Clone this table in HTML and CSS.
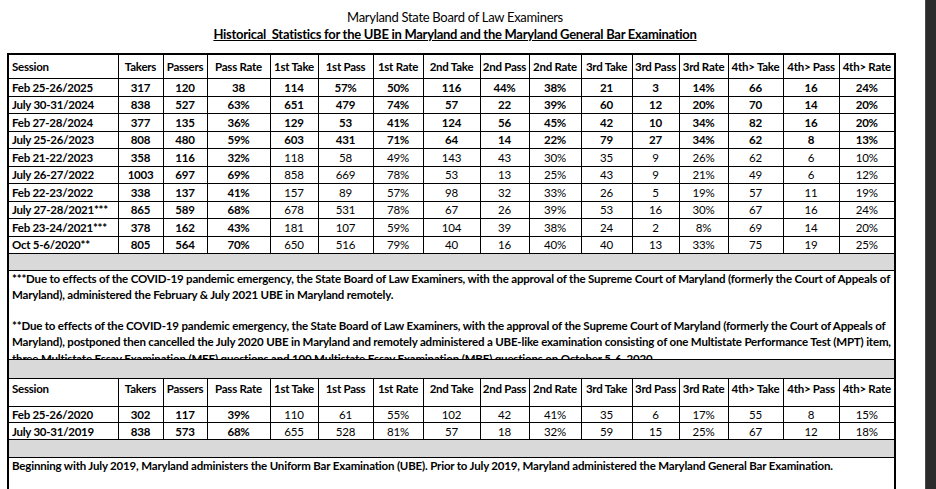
FILE: index.html
```html
<!DOCTYPE html>
<html>
<head>
<meta charset="utf-8">
<link rel="stylesheet" href="styles.css">
</head>
<body>
<div class="page">
  <div class="titles">
    <div class="t1">Maryland State Board of Law Examiners</div>
    <div class="t2">Historical&nbsp; Statistics for the UBE in Maryland and the Maryland General Bar Examination</div>
  </div>
  <table class="stats">
    <colgroup>
      <col style="width:110px"><col style="width:45px"><col style="width:44px"><col style="width:63px">
      <col style="width:48px"><col style="width:55px"><col style="width:50px"><col style="width:57px">
      <col style="width:49px"><col style="width:52px"><col style="width:51px"><col style="width:47px">
      <col style="width:49px"><col style="width:55px"><col style="width:56px"><col style="width:56px">
    </colgroup>
    <tr class="head">
      <th class="ses">Session</th><th>Takers</th><th>Passers</th><th>Pass Rate</th><th>1st Take</th><th>1st Pass</th><th>1st Rate</th><th>2nd Take</th><th>2nd Pass</th><th>2nd Rate</th><th>3rd Take</th><th>3rd Pass</th><th>3rd Rate</th><th>4th&gt; Take</th><th>4th&gt; Pass</th><th>4th&gt; Rate</th>
    </tr>
    <tr class="row all-bold"><td class="ses">Feb 25-26/2025</td><td>317</td><td>120</td><td>38</td><td>114</td><td>57%</td><td>50%</td><td>116</td><td>44%</td><td>38%</td><td>21</td><td>3</td><td>14%</td><td>66</td><td>16</td><td>24%</td></tr>
    <tr class="row all-bold"><td class="ses">July 30-31/2024</td><td>838</td><td>527</td><td>63%</td><td>651</td><td>479</td><td>74%</td><td>57</td><td>22</td><td>39%</td><td>60</td><td>12</td><td>20%</td><td>70</td><td>14</td><td>20%</td></tr>
    <tr class="row all-bold"><td class="ses">Feb 27-28/2024</td><td>377</td><td>135</td><td>36%</td><td>129</td><td>53</td><td>41%</td><td>124</td><td>56</td><td>45%</td><td>42</td><td>10</td><td>34%</td><td>82</td><td>16</td><td>20%</td></tr>
    <tr class="row all-bold"><td class="ses">July 25-26/2023</td><td>808</td><td>480</td><td>59%</td><td>603</td><td>431</td><td>71%</td><td>64</td><td>14</td><td>22%</td><td>79</td><td>27</td><td>34%</td><td>62</td><td>8</td><td>13%</td></tr>
    <tr class="row"><td class="ses">Feb 21-22/2023</td><td>358</td><td>116</td><td>32%</td><td>118</td><td>58</td><td>49%</td><td>143</td><td>43</td><td>30%</td><td>35</td><td>9</td><td>26%</td><td>62</td><td>6</td><td>10%</td></tr>
    <tr class="row"><td class="ses">July 26-27/2022</td><td>1003</td><td>697</td><td>69%</td><td>858</td><td>669</td><td>78%</td><td>53</td><td>13</td><td>25%</td><td>43</td><td>9</td><td>21%</td><td>49</td><td>6</td><td>12%</td></tr>
    <tr class="row"><td class="ses">Feb 22-23/2022</td><td>338</td><td>137</td><td>41%</td><td>157</td><td>89</td><td>57%</td><td>98</td><td>32</td><td>33%</td><td>26</td><td>5</td><td>19%</td><td>57</td><td>11</td><td>19%</td></tr>
    <tr class="row"><td class="ses">July 27-28/2021***</td><td>865</td><td>589</td><td>68%</td><td>678</td><td>531</td><td>78%</td><td>67</td><td>26</td><td>39%</td><td>53</td><td>16</td><td>30%</td><td>67</td><td>16</td><td>24%</td></tr>
    <tr class="row"><td class="ses">Feb 23-24/2021***</td><td>378</td><td>162</td><td>43%</td><td>181</td><td>107</td><td>59%</td><td>104</td><td>39</td><td>38%</td><td>24</td><td>2</td><td>8%</td><td>69</td><td>14</td><td>20%</td></tr>
    <tr class="row"><td class="ses">Oct 5-6/2020**</td><td>805</td><td>564</td><td>70%</td><td>650</td><td>516</td><td>79%</td><td>40</td><td>16</td><td>40%</td><td>40</td><td>13</td><td>33%</td><td>75</td><td>19</td><td>25%</td></tr>
    <tr class="gap g1"><td colspan="16"></td></tr>
    <tr class="notes"><td colspan="16"><div class="clip">
      <p class="note">***Due to effects of the COVID-19 pandemic emergency, the State Board of Law Examiners, with the approval of the Supreme Court of Maryland (formerly the Court of Appeals of<br>Maryland), administered the February &amp; July 2021 UBE in Maryland remotely.</p>
      <p class="note">**Due to effects of the COVID-19 pandemic emergency, the State Board of Law Examiners, with the approval of the Supreme Court of Maryland (formerly the Court of Appeals of<br>Maryland), postponed then cancelled the July 2020 UBE in Maryland and remotely administered a UBE-like examination consisting of one Multistate Performance Test (MPT) item,<br>three Multistate Essay Examination (MEE) questions and 100 Multistate Essay Examination (MBE) questions on October 5-6, 2020.</p>
    </div></td></tr>
    <tr class="gap g2"><td colspan="16"></td></tr>
    <tr class="head2">
      <th class="ses">Session</th><th>Takers</th><th>Passers</th><th>Pass Rate</th><th>1st Take</th><th>1st Pass</th><th>1st Rate</th><th>2nd Take</th><th>2nd Pass</th><th>2nd Rate</th><th>3rd Take</th><th>3rd Pass</th><th>3rd Rate</th><th>4th&gt; Take</th><th>4th&gt; Pass</th><th>4th&gt; Rate</th>
    </tr>
    <tr class="row2"><td class="ses">Feb 25-26/2020</td><td>302</td><td>117</td><td>39%</td><td>110</td><td>61</td><td>55%</td><td>102</td><td>42</td><td>41%</td><td>35</td><td>6</td><td>17%</td><td>55</td><td>8</td><td>15%</td></tr>
    <tr class="row2"><td class="ses">July 30-31/2019</td><td>838</td><td>573</td><td>68%</td><td>655</td><td>528</td><td>81%</td><td>57</td><td>18</td><td>32%</td><td>59</td><td>15</td><td>25%</td><td>67</td><td>12</td><td>18%</td></tr>
    <tr class="gap g3"><td colspan="16"></td></tr>
    <tr class="notes last"><td colspan="16"><p class="note">Beginning with July 2019, Maryland administers the Uniform Bar Examination (UBE). Prior to July 2019, Maryland administered the Maryland General Bar Examination.</p></td></tr>
  </table>
</div>
<div class="side"></div>
</body>
</html>
```
FILE: styles.css
```css
html, body {
  margin: 0;
  padding: 0;
}
body {
  display: flex;
  height: 489px;
  overflow: hidden;
  background: #fff;
  color: #000;
  font-family: Lato, "Liberation Sans", sans-serif;
}
.page {
  flex: 1;
  padding: 9px 0 0 7px;
  overflow: hidden;
}
.side {
  width: 10px;
  background: #2b2b2b;
  border-left: 1px solid #4a4a4a;
}
.titles {
  width: 896px;
  text-align: center;
  margin-bottom: 10px;
}
.t1 {
  font-size: 13px;
  line-height: 17px;
  letter-spacing: -0.3px;
}
.t2 {
  font-size: 13px;
  line-height: 17px;
  font-weight: 700;
  text-decoration: underline;
  letter-spacing: -0.28px;
}
.stats {
  border-collapse: collapse;
  table-layout: fixed;
  width: 887px;
  border: 2px solid #000;
  font-size: 11.5px;
  letter-spacing: -0.25px;
}
.stats th,
.stats td {
  border: 1px solid #000;
  padding: 0;
  text-align: center;
  white-space: nowrap;
  overflow: hidden;
  font-weight: 400;
}
.stats th {
  font-weight: 700;
}
.stats .ses {
  text-align: left;
  padding-left: 3px;
}
.head th {
  height: 22px;
  vertical-align: middle;
  padding-bottom: 1px;
}
.row td {
  height: 16.5px;
  line-height: 15px;
}
.row td:nth-child(-n+4),
.all-bold td,
.row2 td:nth-child(-n+4) {
  font-weight: 700;
}
.gap td {
  background: #d9d9d9;
}
.g1 td { height: 15.5px; }
.g2 td { height: 18px; }
.g3 td { height: 17px; }
.notes td {
  text-align: left;
  vertical-align: top;
  padding-left: 3px;
  white-space: normal;
}
.clip {
  height: 88px;
  overflow: hidden;
}
.note {
  margin: 0 0 14px;
  font-weight: 700;
  line-height: 16.5px;
  white-space: nowrap;
  letter-spacing: -0.18px;
}
.head2 th {
  height: 27px;
  vertical-align: top;
  line-height: 20px;
}
.row2 td {
  height: 15.7px;
  line-height: 15px;
}
.last td {
  height: 60px;
}
```
